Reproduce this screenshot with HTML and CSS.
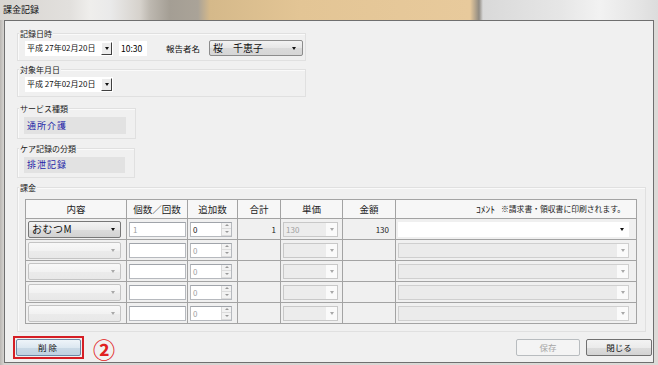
FILE: index.html
```html
<!DOCTYPE html>
<html lang="ja">
<head>
<meta charset="utf-8">
<title>課金記録</title>
<link rel="stylesheet" href="styles.css">
</head>
<body>
<div class="window">
  <div class="titlebar"><span class="title">課金記録</span></div>
  <div class="client">
    <div class="group g1">
      <div class="glabel">記録日時</div>
      <div class="grow">
        <div class="dtp"><span>平成 27年02月20日</span><span class="dtp-btn"><i class="arr"></i></span></div>
        <div class="time">10:30</div>
        <div class="flabel">報告者名</div>
        <div class="combo name"><span>桜　千恵子</span><i class="arr"></i></div>
      </div>
    </div>
    <div class="group g2">
      <div class="glabel">対象年月日</div>
      <div class="grow">
        <div class="dtp"><span>平成 27年02月20日</span><span class="dtp-btn"><i class="arr"></i></span></div>
      </div>
    </div>
    <div class="group g3">
      <div class="glabel">サービス種類</div>
      <div class="rofield">通所介護</div>
    </div>
    <div class="group g4">
      <div class="glabel">ケア記録の分類</div>
      <div class="rofield">排泄記録</div>
    </div>
    <div class="group g5">
      <div class="glabel">課金</div>
      <div class="grid">
        <div class="th">内容</div>
        <div class="th">個数／回数</div>
        <div class="th">追加数</div>
        <div class="th">合計</div>
        <div class="th">単価</div>
        <div class="th">金額</div>
        <div class="th th-comment"><span class="hk">ｺﾒﾝﾄ</span><span class="note">※請求書・領収書に印刷されます。</span></div>

        <div class="td"><div class="cb cb-on"><span>おむつM</span><i class="arr"></i></div></div>
        <div class="td"><div class="tb"><span class="gray">1</span></div></div>
        <div class="td"><div class="num"><span>0</span><div class="spin"><i class="up"></i><i class="down"></i></div></div></div>
        <div class="td td-r">1</div>
        <div class="td"><div class="cb2"><span class="gray">130</span><span class="cb2-btn"><i class="arr arr-g"></i></span></div></div>
        <div class="td td-r td-amt">130</div>
        <div class="td"><div class="cmt cmt-on"><i class="arr"></i></div></div>

        <div class="td"><div class="cb cb-off"><i class="arr arr-g"></i></div></div>
        <div class="td"><div class="tb"></div></div>
        <div class="td"><div class="num"><span class="gray">0</span><div class="spin"><i class="up"></i><i class="down"></i></div></div></div>
        <div class="td"></div>
        <div class="td"><div class="cb2"><span></span><span class="cb2-btn"><i class="arr arr-g"></i></span></div></div>
        <div class="td"></div>
        <div class="td"><div class="cmt"><span class="cmt-btn"><i class="arr arr-g"></i></span></div></div>

        <div class="td"><div class="cb cb-off"><i class="arr arr-g"></i></div></div>
        <div class="td"><div class="tb"></div></div>
        <div class="td"><div class="num"><span class="gray">0</span><div class="spin"><i class="up"></i><i class="down"></i></div></div></div>
        <div class="td"></div>
        <div class="td"><div class="cb2"><span></span><span class="cb2-btn"><i class="arr arr-g"></i></span></div></div>
        <div class="td"></div>
        <div class="td"><div class="cmt"><span class="cmt-btn"><i class="arr arr-g"></i></span></div></div>

        <div class="td"><div class="cb cb-off"><i class="arr arr-g"></i></div></div>
        <div class="td"><div class="tb"></div></div>
        <div class="td"><div class="num"><span class="gray">0</span><div class="spin"><i class="up"></i><i class="down"></i></div></div></div>
        <div class="td"></div>
        <div class="td"><div class="cb2"><span></span><span class="cb2-btn"><i class="arr arr-g"></i></span></div></div>
        <div class="td"></div>
        <div class="td"><div class="cmt"><span class="cmt-btn"><i class="arr arr-g"></i></span></div></div>

        <div class="td"><div class="cb cb-off"><i class="arr arr-g"></i></div></div>
        <div class="td"><div class="tb"></div></div>
        <div class="td"><div class="num"><span class="gray">0</span><div class="spin"><i class="up"></i><i class="down"></i></div></div></div>
        <div class="td"></div>
        <div class="td"><div class="cb2"><span></span><span class="cb2-btn"><i class="arr arr-g"></i></span></div></div>
        <div class="td"></div>
        <div class="td"><div class="cmt"><span class="cmt-btn"><i class="arr arr-g"></i></span></div></div>
      </div>
    </div>
    <div class="footer">
      <div class="highlight"><div class="btn btn-del">削除</div></div>
      <div class="marker">②</div>
      <div class="btn btn-dis">保存</div>
      <div class="btn btn-close">閉じる</div>
    </div>
  </div>
</div>
</body>
</html>
```

FILE: styles.css
```css
html, body {
  margin: 0;
  padding: 0;
}
body {
  font-family: "Noto Sans CJK JP", "Liberation Sans", sans-serif;
  color: #000;
  background: #d4d4d4;
}
.window {
  width: 658px;
  height: 365px;
  display: flex;
  flex-direction: column;
  background: linear-gradient(to right, #b9b6b2 0, #d6d4d1 4px, #dcdad7 658px);
  overflow: hidden;
}
.titlebar {
  height: 20px;
  flex: none;
  padding-left: 3px;
  background: linear-gradient(to right,
    #d8d5d1 0, #e2e0dd 70px, #efeeec 90px, #eaeaea 110px, #d6d2cc 140px,
    #bdb8b0 150px, #a49e94 170px, #aaa398 198px, #d5b98a 210px,
    #e3c595 300px, #e8ca9c 470px, #8f8a82 479px, #d9d9d9 483px,
    #e6e6e6 560px, #f2f2f2 600px, #e4e4e4 640px, #dcdcdc 658px);
  display: flex;
  align-items: center;
}
.title {
  font-size: 9px;
  line-height: 12px;
  color: #111;
}
.client {
  flex: none;
  margin-left: 4px;
  width: 650px;
  height: 343px;
  box-sizing: border-box;
  border: 1px solid #6f6f6f;
  background: #f0f0f0;
  padding-left: 8px;
  display: flex;
  flex-direction: column;
  align-items: flex-start;
}
.group {
  box-sizing: border-box;
  border: 1px solid #e0e0e0;
  box-shadow: inset 1px 1px 0 #fafafa;
  margin-left: 4px;
  display: flex;
  flex-direction: column;
  align-items: flex-start;
}
.glabel {
  margin-top: -6px;
  margin-left: 1px;
  height: 12px;
  line-height: 12px;
  font-size: 8px;
  padding: 0 1px;
  background: #f0f0f0;
  color: #1a1a1a;
}
.g1 {
  margin-top: 12px;
  width: 289px;
  padding-bottom: 4px;
}
.g2 {
  margin-top: 8px;
  width: 289px;
  padding-bottom: 4px;
}
.g3 {
  margin-top: 11px;
  width: 119px;
  padding-bottom: 4px;
}
.g4 {
  margin-top: 9px;
  width: 118px;
  padding-bottom: 4px;
}
.g5 {
  margin-top: 9px;
  width: 629px;
  padding-bottom: 7px;
}
.grow {
  display: flex;
  align-items: center;
  height: 16px;
  padding-left: 7px;
}
.dtp {
  width: 88px;
  height: 15px;
  box-sizing: border-box;
  background: #fff;
  display: flex;
  align-items: center;
  padding-left: 2px;
  font-size: 8px;
  line-height: 10px;
  color: #111;
}
.dtp-btn {
  margin-left: auto;
  width: 11px;
  height: 13px;
  box-sizing: border-box;
  background: #ececec;
  border-top: 1px solid #fff;
  border-left: 1px solid #fff;
  border-right: 1px solid #404040;
  border-bottom: 1px solid #404040;
  display: flex;
  align-items: center;
  justify-content: center;
  margin-right: 1px;
}
.arr {
  display: block;
  width: 0;
  height: 0;
  border-left: 2.5px solid transparent;
  border-right: 2.5px solid transparent;
  border-top: 3px solid #111;
}
.arr-g {
  border-top-color: #a8a8a8;
}
.time {
  margin-left: 6px;
  width: 28px;
  height: 15px;
  background: #fff;
  font-size: 8.5px;
  line-height: 15px;
  padding-left: 2px;
  box-sizing: border-box;
}
.flabel {
  margin-left: 19px;
  font-size: 8.5px;
  line-height: 12px;
  color: #111;
}
.combo {
  box-sizing: border-box;
  display: flex;
  align-items: center;
  border: 1px solid #8c8c8c;
  border-radius: 2px;
  background: linear-gradient(#f2f2f2, #e6e6e6 50%, #dadada 51%, #d6d6d6);
}
.name {
  margin-left: 9px;
  width: 94px;
  height: 16px;
  padding: 0 6px 0 3px;
  font-size: 10px;
  line-height: 14px;
  color: #111;
}
.name .arr, .cb .arr {
  margin-left: auto;
}
.rofield {
  margin: 2px 0 0 6px;
  width: 102px;
  height: 17px;
  box-sizing: border-box;
  background: #e2e2e2;
  color: #2626a8;
  font-size: 9px;
  line-height: 17px;
  letter-spacing: 1px;
  padding-left: 3px;
}
.g4 .rofield {
  width: 101px;
  height: 16px;
  line-height: 16px;
}
.grid {
  margin: 5px 0 0 7px;
  display: grid;
  grid-template-columns: 100px 60px 49px 42px 61px 52px 240px;
  grid-template-rows: 18px repeat(5, 20px);
  gap: 1px;
  border: 1px solid #a3a3a3;
  background: #a3a3a3;
}
.th {
  background: #f7f7f7;
  font-size: 9.5px;
  line-height: 18px;
  text-align: center;
  color: #222;
}
.th-comment {
  text-align: right;
  padding-right: 11px;
  display: flex;
  justify-content: flex-end;
  align-items: center;
}
.hk {
  font-size: 9.5px;
  margin-right: 6px;
}
.note {
  font-size: 7.8px;
}
.td {
  background: #f0f0f0;
  display: flex;
  align-items: center;
  font-size: 8px;
  color: #222;
}
.td-r {
  justify-content: flex-end;
  padding-right: 4px;
}
.td-amt {
  padding-right: 6px;
}
.gray {
  color: #a0a0a0;
}
.cb {
  margin-left: 2px;
  width: 93px;
  height: 17px;
  box-sizing: border-box;
  border-radius: 2px;
  display: flex;
  align-items: center;
  padding: 0 5px 0 3px;
}
.cb-on {
  border: 1px solid #777;
  background: linear-gradient(#f3f3f3, #e8e8e8 50%, #dcdcdc 51%, #d2d2d2);
  font-size: 10px;
  line-height: 14px;
  letter-spacing: 0.5px;
  color: #111;
}
.cb-off {
  border: 1px solid #c4c4c4;
  background: linear-gradient(#f8f8f8, #f2f2f2 50%, #ebebeb 51%, #e8e8e8);
}
.tb {
  margin-left: 2px;
  width: 57px;
  height: 15px;
  box-sizing: border-box;
  background: #fff;
  border: 1px solid #b6b9be;
  border-top-color: #a0a4aa;
  padding-left: 3px;
  font-size: 8px;
  line-height: 13px;
}
.num {
  margin-left: 2px;
  width: 42px;
  height: 15px;
  box-sizing: border-box;
  background: #fff;
  border: 1px solid #b6b9be;
  border-top-color: #a0a4aa;
  display: flex;
  align-items: center;
  padding-left: 2px;
  font-size: 8px;
  line-height: 13px;
}
.spin {
  margin-left: auto;
  width: 9px;
  height: 13px;
  display: flex;
  flex-direction: column;
  border-left: 1px solid #d8d8d8;
}
.spin i {
  flex: 1;
  display: flex;
  align-items: center;
  justify-content: center;
  background: #f2f2f2;
  border-bottom: 1px solid #dcdcdc;
}
.spin i::before {
  content: "";
  width: 0;
  height: 0;
  border-left: 2px solid transparent;
  border-right: 2px solid transparent;
}
.spin .up::before {
  border-bottom: 2px solid #999;
}
.spin .down::before {
  border-top: 2px solid #999;
}
.cb2 {
  margin-left: 2px;
  width: 55px;
  height: 15px;
  box-sizing: border-box;
  border: 1px solid #c8c8c8;
  background: #ececec;
  display: flex;
  align-items: center;
  padding-left: 2px;
  font-size: 8px;
  line-height: 13px;
}
.cb2-btn, .cmt-btn {
  margin-left: auto;
  width: 11px;
  height: 13px;
  background: #fafafa;
  display: flex;
  align-items: center;
  justify-content: center;
}
.cmt {
  margin-left: 2px;
  width: 231px;
  height: 15px;
  box-sizing: border-box;
  border: 1px solid #cfcfcf;
  background: #ebebeb;
  display: flex;
  align-items: center;
}
.cmt-on {
  background: #fff;
  border-color: #fff;
  justify-content: flex-end;
  padding-right: 4px;
}
.footer {
  margin-top: 4px;
  width: 639px;
  display: flex;
  align-items: center;
}
.highlight {
  border: 2px solid #d51e24;
  padding: 1px;
  width: 71px;
  box-sizing: border-box;
}
.btn {
  height: 17px;
  box-sizing: border-box;
  border-radius: 2px;
  font-size: 8.5px;
  line-height: 15px;
  text-align: center;
}
.btn-del {
  width: 65px;
  border: 1px solid #6d89a6;
  background: linear-gradient(#eef4f9, #dce8f1 50%, #c9d9e6 51%, #c0d2e1);
  color: #111;
  letter-spacing: 2px;
}
.marker {
  margin-left: 9px;
  font-size: 22px;
  line-height: 22px;
  font-weight: 700;
  color: #e02020;
}
.btn-dis {
  margin-left: auto;
  width: 64px;
  border: 1px solid #b8bcbf;
  background: #f4f4f4;
  color: #a6a6a6;
}
.btn-close {
  margin-left: 6px;
  width: 66px;
  border: 1px solid #707070;
  background: linear-gradient(#f3f3f3, #ebebeb 50%, #dddddd 51%, #d3d3d3);
  color: #111;
}
```
